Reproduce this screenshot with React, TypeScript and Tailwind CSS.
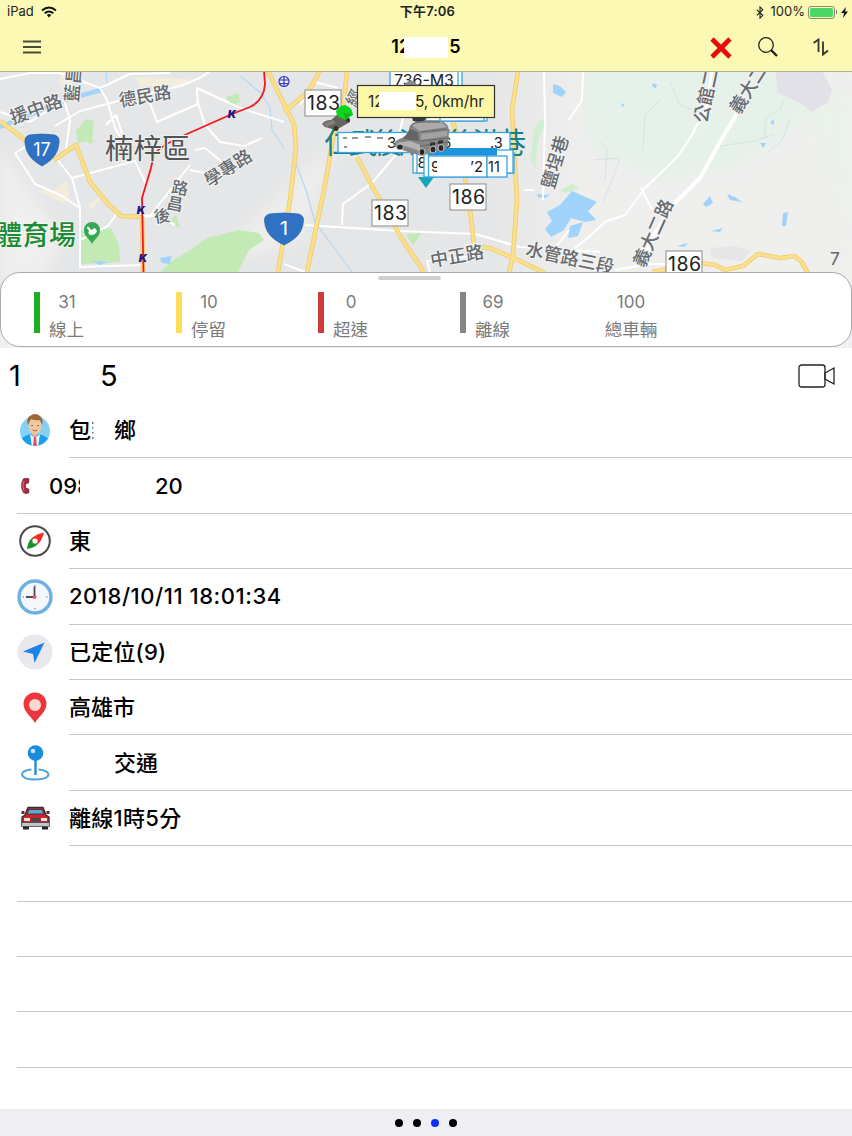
import React from "react";

const roads = [
  "M0 79 L30 73 L60 73 L100 88 L130 74 L170 73",
  "M0 112 L30 122 L64 100 L70 120 L66 150",
  "M55 126 L80 111 L130 98 L180 86 L200 78 L210 71",
  "M100 88 L107 100 L115 128 L128 150",
  "M106 125 L116 115 L127 150",
  "M145 90 L157 122 L198 104 L197 88 L240 108 L284 122",
  "M197 100 L205 125 L220 142 L244 146 L262 138",
  "M15 153 L35 184 L60 195 L80 208 L80 267 L142 265",
  "M15 153 L40 138 L72 178 L80 208",
  "M72 178 L135 161 L146 184",
  "M190 165 L186 170 L150 216 L142 217",
  "M190 170 L205 173 L214 184",
  "M195 150 L205 148 L222 162",
  "M80 240 L108 226 L117 213",
  "M142 215 L160 217 L175 225",
  "M305 225 L400 231 L475 234 L520 247 L600 252",
  "M342 225 L343 204 L372 183 L398 152",
  "M300 105 L315 82 L338 88",
  "M400 131 L413 71",
  "M284 264 L305 272",
  "M524 190 L534 190",
  "M544 71 L545 120 L543 200",
  "M430 272 L427 261 L474 256",
  "M583 71 L582 100 L569 120",
  "M569 230 L552 252 L555 262",
  "M690 138 L678 156 L665 169 L645 188 L625 215 L605 222 L590 236 L575 248",
  "M641 188 L652 210",
  "M615 270 L650 264 L670 264",
];

const yellowRoads = [
  "M0 121 L28 142",
  "M54 160 L76 145 L90 182 L108 204 L121 216 L142 217",
  "M142 216 L143 272",
  "M347 71 L343 110 L334 133 L324 190 L307 272",
  "M268 71 L282 100 L294 124 L296 148 L290 200 L278 272",
  "M320 71 L308 92 L284 112",
  "M357 157 L372 186 L400 236 L424 272",
  "M456 71 L453 120 L465 178 L470 210 L474 245",
  "M474 247 L490 248 L520 261 L545 273",
  "M518 71 L512 110 L514 150 L517 200 L513 255 L509 273",
  "M652 272 L700 263 L715 265 L725 270 L743 266 L758 254 L780 258 L794 256 L801 261 L808 273",
];

const streams = [
  "M106 71 L107 84 L101 90",
  "M240 76 L262 94 L270 108 L272 130 L284 148",
  "M296 164 L306 190 L315 222 L352 272",
];

const creeks = [
  "M594 160 L620 158 L615 173 L603 202",
  "M720 146 L755 141 L775 134",
  "M670 82 L680 105 L707 115",
  "M605 180 L607 150 L600 142",
  "M790 120 L782 140 L768 152",
  "M660 100 L645 115 L643 150",
  "M784 98 L781 108 L766 118 L764 138",
];

const parks = [
  "M76 131 L86 119 L94 121 L92 140 L78 143z",
  "M226 97 L238 93 L240 102 L232 106z",
  "M80 231 L111 228 L119 245 L120 262 L81 264z",
  "M161 272 L170 262 L192 249 L207 238 L239 230 L259 233 L264 240 L249 250 L238 272z",
  "M406 234 L421 233 L413 246z",
  "M168 222 L176 215 L180 228z",
  "M84 138 L96 141 L90 144z",
];

const ponds = [
  "M547 212 L560 205 L572 191 L597 202 L588 211 L596 220 L585 222 L571 218 L564 230 L551 237 L545 229 L552 221z",
  "M570 226 L583 222 L578 236 L568 238z",
  "M553 84 L560 86 L566 92 L562 97 L553 93z",
  "M727 194 L735 197 L742 202 L730 200z",
  "M703 204 L710 196 L713 203 L706 207z",
  "M783 213 L788 212 L786 226 L782 226z",
  "M711 231 L723 228 L720 232z",
  "M677 246 L688 243 L684 247z",
  "M760 143 L766 143 L763 148z",
  "M620 103 L625 105 L623 107z",
  "M652 84 L657 84 L656 88 L653 87z",
  "M770 123 L774 119 L774 125z",
  "M160 258 L172 256 L169 264 L162 263z",
  "M92 261 L108 262 L100 265z",
  "M537 194 L550 195 L545 198 L538 197z",
];

const streetNames = [
  { text: "援中路", x: 36, y: 109, angle: -20, size: 18 },
  { text: "藍昌", x: 73, y: 84, angle: -85, size: 18 },
  { text: "德民路", x: 145, y: 96, angle: -10, size: 17.5 },
  { text: "學專路", x: 228, y: 168, angle: -33, size: 17.5 },
  { text: "後", x: 162, y: 216, angle: -8, size: 16.5 },
  { text: "昌", x: 175, y: 204, angle: 12, size: 16.5 },
  { text: "路", x: 180, y: 188, angle: 10, size: 16.5 },
  { text: "鹽埕巷", x: 555, y: 162, angle: -74, size: 18 },
  { text: "公館二", x: 706, y: 96, angle: -78, size: 18 },
  { text: "義大二", x: 748, y: 89, angle: -58, size: 18 },
  { text: "義大二路", x: 653, y: 233, angle: -66, size: 18 },
  { text: "中正路", x: 457, y: 256, angle: -10, size: 18 },
  { text: "水管路三段", x: 570, y: 258, angle: 12, size: 18 },
  { text: "經", x: 354, y: 98, angle: -62, size: 16 },
];

const plates = [
  { text: "183", x: 305, y: 90, h: 26 },
  { text: "183", x: 372, y: 200, h: 26 },
  { text: "186", x: 450, y: 184, h: 26 },
  { text: "186", x: 666, y: 251, h: 26 },
];

const Shield = ({ x, y, text }: { x: number; y: number; text: string }) => (
  <g transform={`translate(${x} ${y})`}>
    <path
      d="M-13 -15 Q0 -17 13 -15 Q18 -13 17 -7 C16 6 7 12 0 16 C-7 12 -16 6 -17 -7 Q-18 -13 -13 -15z"
      fill="#2f72c4"
      stroke="#225ba4"
      strokeWidth="0.6"
    />
    <text y="6" textAnchor="middle" fontSize="18" fill="#fff">
      {text}
    </text>
  </g>
);

const VehicleMap = () => {
  return (
    <svg
      viewBox="0 72 852 276"
      className="block h-[276px] w-[852px]"
      fontFamily='Inter, "Noto Sans CJK TC", sans-serif'
    >
      <defs>
        <linearGradient id="land">
          <stop offset="0" stopColor="#e5e6e7" />
          <stop offset="0.58" stopColor="#e5e6e7" />
          <stop offset="0.68" stopColor="#eeeeed" />
          <stop offset="1" stopColor="#efefee" />
        </linearGradient>
        <filter id="soft">
          <feGaussianBlur stdDeviation="7" />
        </filter>
      </defs>
      <rect y="71" width="852" height="277" fill="url(#land)" />

      <g filter="url(#soft)">
        <path d="M580 60 L780 60 L840 100 L790 130 L735 170 L660 180 L590 150z" fill="#e6f1e9" />
        <path d="M800 110 L852 90 L852 240 L845 220z" fill="#ebf2ea" />
        <path d="M0 150 L60 235 L45 280 L0 280z" fill="#efefef" />
        <path d="M200 272 L310 165 L340 140 L300 240z" fill="#ededec" />
      </g>
      <path d="M776 71 H822 L832 90 L828 102 L812 112 L800 103 L777 92z" fill="#e2e1e7" />
      <path d="M56 190 L66 180 L70 200 L62 203 L37 190z M88 205 L106 192 L95 205 L90 211z M135 77 L190 79 L180 86 L140 86z" fill="#f5eddb" />
      <path d="M60 71 L80 71 L70 88 L60 85z" fill="#f3ecdc" />
      <path d="M710 248 L735 246 L750 251 L742 261 L712 258z" fill="#e6e6e7" />
      <path d="M534 130 L540 119 L546 122 L538 140 L535 168 L530 160z M560 190 L572 184 L580 188 L565 193z" fill="#d0eed0" />

      {parks.map((d) => (
        <path key={d} d={d} fill="#c3e9b5" />
      ))}
      {ponds.map((d) => (
        <path key={d} d={d} fill="#9fd3fb" />
      ))}
      <g fill="none" stroke="#b3d8f2" strokeWidth="1.2">
        {streams.map((d) => (
          <path key={d} d={d} />
        ))}
      </g>
      <g fill="none" stroke="#d5e2e6" strokeWidth="1">
        {creeks.map((d) => (
          <path key={d} d={d} />
        ))}
      </g>
      <path d="M0 127 L30 115 L65 100 L101 90" fill="none" stroke="#a3d5f8" strokeWidth="4.5" />

      <g fill="none" stroke="#fff" strokeWidth="2" strokeLinejoin="round">
        {roads.map((d) => (
          <path key={d} d={d} />
        ))}
        <path d="M742 105 L720 142 L700 178 L675 203 L652 238 L642 265" strokeWidth="4" />
        <path d="M712 71 L706 110 L690 138" strokeWidth="2.5" />
      </g>
      <g fill="none" stroke="#f0cb6c" strokeWidth="4.6" strokeLinejoin="round">
        {yellowRoads.map((d) => (
          <path key={d} d={d} />
        ))}
      </g>
      <g fill="none" stroke="#fbe08c" strokeWidth="3" strokeLinejoin="round">
        {yellowRoads.map((d) => (
          <path key={d} d={d} />
        ))}
      </g>

      <path
        d="M264 71 L265 84 Q264 100 250 107 L232 114 L187 134 Q163 144 154 154 L151 168 L142 198 L143.5 273"
        fill="none"
        stroke="#f5171b"
        strokeWidth="1.8"
      />
      <g fill="#1d1688" fontSize="11" fontWeight="900" fontStyle="italic" textAnchor="middle">
        <text x="232" y="118">K</text>
        <text x="141" y="214">K</text>
        <text x="143" y="262">K</text>
      </g>
      <g fill="none" stroke="#3b36c4" strokeWidth="1.2">
        <circle cx="284" cy="81.500" r="5" />
        <path d="M284 76 V87 M279 80 H289 M279 83.500 H289" />
      </g>

      <g fill="#666c70" fontWeight="500" stroke="#f4f4f4" strokeWidth="2" paintOrder="stroke">
        {streetNames.map((s) => (
          <text
            key={s.text + s.x}
            transform={`translate(${s.x} ${s.y}) rotate(${s.angle})`}
            y={s.size * 0.36}
            fontSize={s.size}
            textAnchor="middle"
          >
            {s.text}
          </text>
        ))}
      </g>
      <text x="105" y="159" fontSize="28.500" fill="#515356" stroke="#f0f0f0" strokeWidth="2" paintOrder="stroke">
        楠梓區
      </text>
      <text x="-5" y="244.500" fontSize="27" fontWeight="500" fill="#1f8a35" stroke="#f0f5ef" strokeWidth="2" paintOrder="stroke">
        體育場
      </text>
      <path d="M92 244 C90 239 84 237 84 230 A8 8 0 0 1 100 230 C100 237 94 239 92 244z" fill="#35a853" />
      <path d="M87 228 Q87 226 89 227 L91 230 L95 228 L97 231 Q96 235 91 235 Q87 234 89 231z" fill="#fff" />

      <Shield x={42} y={150} text="17" />
      <g transform="translate(284 229) scale(1.14 1)">
        <Shield x={0} y={0} text="1" />
      </g>

      {plates.map((p) => (
        <g key={p.text + p.x}>
          <rect x={p.x} y={p.y} width="36" height={p.h} fill="#fff" stroke="#8a8a8a" />
          <text x={p.x + 2} y={p.y + 20} fontSize="19.500" textLength="33" fill="#222">
            {p.text}
          </text>
        </g>
      ))}
      <text x="830" y="265" fontSize="17.500" fill="#666">
        7
      </text>

      {/* town name and vehicles at the depot */}
      <text x="324" y="154" fontSize="29" textLength="202" fill="#158186">
        仁武後港新後港巷
      </text>
      <path d="M418 177 H434 L426 188z" fill="#11a7b8" />

      <g fill="#fff" stroke="#3aa5e2" strokeWidth="1.3">
        <rect x="394" y="66" width="68" height="22" />
        <rect x="390" y="66" width="68" height="22" />
        <rect x="426" y="99" width="61" height="22" />
        <rect x="440" y="99" width="44" height="22" />
        <rect x="338" y="132.500" width="72" height="20" />
        <rect x="442" y="132.500" width="68" height="20" />
        <rect x="413" y="153" width="101" height="20" />
        <rect x="417" y="150" width="96" height="23" />
      </g>
      <text x="417.500" y="168" fontSize="15" fill="#222">
        8
      </text>
      <g fill="#fff" stroke="#3aa5e2" strokeWidth="1.3">
        <rect x="424" y="153" width="63" height="24" />
        <rect x="428.500" y="156" width="58.500" height="21" />
        <rect x="487" y="156" width="20" height="21" />
      </g>
      <path d="M435 148 H497 V155.500 H427z" fill="#1d94dc" />
      <g fill="#222" fontSize="15">
        <text x="394" y="86" fontSize="16" textLength="60">
          736-M3
        </text>
        <text x="387" y="148">3</text>
        <text x="442" y="148">6</text>
        <text x="490" y="148" fontSize="14.500">
          .3
        </text>
        <text x="431" y="172">9</text>
        <text x="470" y="172">’2</text>
        <text x="488" y="172" fontSize="14.500">
          11
        </text>
      </g>
      <rect x="437" y="159" width="34" height="16" fill="#fff" />
      <path d="M343 138 h4 m5 0 h6 m7 -1 h6 m6 1 h6 M344 147 h3" stroke="#333" strokeWidth="1.2" />

      {/* parked grey truck */}
      <g>
        <path d="M412 117 H426 L424 123 L413 121z" fill="#383838" />
        <path
          d="M394 146 Q394 140 402 138 L409 133 Q408 126 413 123 Q425 119 441 121 Q449 123 449 132 L448 145 Q447 151 439 151 L421 156 L402 150z"
          fill="#868686"
        />
        <path d="M411 125 Q424 120 441 122 L447 127 L420 131z" fill="#aaa" />
        <path d="M411 127 Q412 123 418 122 H440" fill="none" stroke="#5e5e5e" />
        <path d="M410 129 L418 132 L419 141 L403 139z" fill="#656565" />
        <path d="M396 143 L410 141 L420 145 V151 L408 147z" fill="#b3b3b3" />
        <path d="M421 134 L447 131 V136 L421 140z" fill="#a3a3a3" />
        <path d="M420 132 L447 129 M420 141 L448 138 M420 146 L448 142 M431 141 V151 M440 139 V149" fill="none" stroke="#666" />
        <path d="M430 143 l5 -1 v3 l-5 1z M438 141 l5 -1 v3 l-5 1z" fill="#333" />
        <g fill="#282828" stroke="#c5c5c5">
          <ellipse cx="400" cy="147" rx="3.500" ry="3" />
          <ellipse cx="422" cy="152" rx="3" ry="3.500" />
          <ellipse cx="433" cy="149.500" rx="3" ry="3.500" />
          <ellipse cx="441" cy="148" rx="3" ry="3.500" />
        </g>
      </g>
      {/* moving truck */}
      <g>
        <path d="M322 124 Q325 120 331 120 L337 115 L350 119 V122 L336 130 L325 127z" fill="#65635b" />
        <path d="M323 124 L333 120 L336 123 L327 127z" fill="#85827b" />
        <circle cx="336" cy="128.500" r="2.500" fill="#333" />
        <circle cx="348" cy="120" r="2" fill="#333" />
        <path d="M336 111 Q340 105 345 105 Q352 107 353 115 L345 120 L337 116z" fill="#0cd41a" />
        <path d="M343 113 L351 114 L346 119z" fill="#10af1c" />
      </g>
      <path d="M404 85 Q411 76 417 85z" fill="#8b8b8b" />

      <rect x="357.500" y="85.500" width="137" height="32" fill="#fcf8a7" stroke="#333" strokeWidth="1.2" />
      <g fill="#26261c" fontSize="15.500">
        <text x="368" y="107">12</text>
        <rect x="379" y="92" width="37" height="18" fill="#fff" />
        <text x="415" y="107" textLength="69">
          5, 0km/hr
        </text>
      </g>
    </svg>
  );
};

const stats = [
  { count: "31", label: "線上", color: "bg-[#1cae24]" },
  { count: "10", label: "停留", color: "bg-[#ffdc55]" },
  { count: "0", label: "超速", color: "bg-[#cf3a3b]" },
  { count: "69", label: "離線", color: "bg-[#868686]" },
];

const DriverIcon = () => (
  <svg viewBox="0 0 36 36" className="h-9 w-9">
    <clipPath id="avatar">
      <path d="M3 0 H33 V18 A15 15 0 0 1 3 18z" />
    </clipPath>
    <circle cx="18" cy="18" r="15" fill="#85d0f5" />
    <g clipPath="url(#avatar)">
      <path d="M4 34 V26 Q10 21 15 21 H21 Q27 22 32 26 V34z" fill="#15a2eb" />
      <path d="M13 21 L18 25 L23 21 L21 34 H15z" fill="#f2f5fa" />
      <path d="M17 23.500 H19 L20 34 H16z" fill="#e14d65" />
    </g>
    <path d="M15 18 H21 V22 L18 24.500 L15 22z" fill="#e2b58c" />
    <ellipse cx="18" cy="13" rx="6.500" ry="8" fill="#efc99d" />
    <path d="M11 12 Q9 5 13 3 Q18 -1 23 3 Q27 6 25 12 L23 7 Q18 8 14 6z" fill="#9c653b" />
    <path d="M15 12 v1 M21 12 v1" stroke="#634c32" strokeWidth="1.4" />
    <path d="M15.500 17 Q18 19 20.500 17" fill="none" stroke="#b3644b" />
  </svg>
);

const PhoneIcon = () => (
  <svg viewBox="0 0 16 16" className="h-4 w-4">
    <path
      d="M6.500 0.800 Q10 -0.500 12 1 L11.500 5 L9 5.500 Q7.800 8 9 10.500 L11.700 11 L12 14.500 Q9 16.500 6.500 14.500 Q2.500 8 6.500 0.800z"
      fill="#a92b40"
      stroke="#64242d"
      strokeWidth="0.8"
    />
    <path d="M7 3 Q4.500 8 7 13" fill="none" stroke="#da7383" />
  </svg>
);

const CompassIcon = () => (
  <svg viewBox="0 0 36 36" className="h-9 w-9">
    <circle cx="18" cy="18" r="14.800" fill="#fff" stroke="#48484c" strokeWidth="2" />
    <path d="M27 9.500 Q25 17 21.500 20.500 L14.500 15.500 Q19 11 27 9.500z" fill="#f52b25" />
    <path d="M10 26 Q11 18.500 14.500 15.500 L21.500 20.500 Q17 25 10 26z" fill="#179225" />
    <circle cx="18" cy="18" r="2.600" fill="#fff" />
  </svg>
);

const ClockIcon = () => (
  <svg viewBox="0 0 36 36" className="h-9 w-9">
    <circle cx="18" cy="18" r="16" fill="#f4f7fb" stroke="#6db1e3" strokeWidth="3.400" />
    <path d="M18 6 v1.500 M18 29 v1.500 M5.500 18 h1.500 M29 18 h1.500" stroke="#777" />
    <path d="M17.500 7.500 V18 H9" fill="none" stroke="#4b4b55" strokeWidth="1.8" />
    <circle cx="17.500" cy="18" r="2" fill="#e05360" />
  </svg>
);

const LocateIcon = () => (
  <svg viewBox="0 0 36 36" className="h-9 w-9">
    <circle cx="18" cy="18" r="17.500" fill="#e8e9ec" />
    <path d="M27.500 8.500 L17.500 29 L16 20 L6 17.500z" fill="#1c83ea" />
  </svg>
);

const PinIcon = () => (
  <svg viewBox="0 0 36 36" className="h-9 w-9">
    <path d="M18 33 C15 27 6.500 22 6.500 14 A11.500 11.500 0 0 1 29.500 14 C29.500 22 21 27 18 33z" fill="#ed353e" />
    <circle cx="18" cy="15" r="6" fill="#f9d9cf" />
  </svg>
);

const PlaceIcon = () => (
  <svg viewBox="0 0 36 36" className="h-9 w-9">
    <path
      d="M14.500 24.500 Q5 25.500 5 29.500 Q6 34.500 18 34.500 Q31 34.500 31.500 29.500 Q31 25.500 21.500 24.500"
      fill="none"
      stroke="#4ba3dd"
      strokeWidth="2"
    />
    <path d="M18.500 13 V30" stroke="#278dcd" strokeWidth="2.400" />
    <circle cx="18.500" cy="8" r="7.800" fill="#198cdf" />
    <circle cx="16" cy="6" r="2.300" fill="#c4e6fb" />
  </svg>
);

const CarIcon = () => (
  <svg viewBox="0 0 36 36" className="h-9 w-9">
    <path d="M6 26 h6 v3.500 H6z M25 26 h6 v3.500 h-6z" fill="#272424" />
    <path d="M8 15 L11 7.500 H26 L29 15 L32 17 V25 H5 V17z" fill="#c9252b" stroke="#43262a" strokeWidth="1.4" />
    <path d="M12 9.500 H25 L27 14 H10z" fill="#59aad4" stroke="#382b32" strokeWidth="0.800" />
    <path d="M4.500 11 h3 v3 h-3z M29.500 11 h3 v3 h-3z" fill="#542d30" />
    <path d="M7 18 h6 v3 H7z M24 18 h6 v3 h-6z" fill="#eee9df" />
    <path d="M14 18 h9 v3.500 h-9z" fill="#464650" />
    <path d="M4.500 22.500 H32.500 V26.500 H4.500z" fill="#bfc4c9" stroke="#44444a" strokeWidth="0.800" />
  </svg>
);

const details = [
  {
    icon: <DriverIcon />,
    value: (
      <>
        <span>包</span>
        <svg viewBox="0 0 2 20" className="ml-px h-5 w-0.5" fill="#777">
          <path d="M0 1 h1.500 v2 H0z M0 6 h1.500 v1.500 H0z M0 11 h1.500 v1.500 H0z M0 16 h1.500 v2 H0z" />
        </svg>
        <span className="ml-5">鄉</span>
      </>
    ),
  },
  { icon: <CompassIcon />, value: "東" },
  { icon: <ClockIcon />, value: <span className="tracking-[0.55px]">2018/10/11 18:01:34</span> },
  { icon: <LocateIcon />, value: <span className="tracking-[0.2px]">已定位(9)</span> },
  { icon: <PinIcon />, value: "高雄市" },
  { icon: <PlaceIcon />, value: <span className="ml-[45px]">交通</span> },
  { icon: <CarIcon />, value: <span className="tracking-[0.3px]">離線1時5分</span> },
];

const DetailRow = ({ icon, value }: { icon: React.ReactNode; value: React.ReactNode }) => (
  <div className="flex h-[55.4px] pl-[17px]">
    <div className="flex w-[52px] items-center">{icon}</div>
    <div className="flex flex-1 items-center border-b border-[#c8c7cc] pt-px whitespace-pre">{value}</div>
  </div>
);

const App = () => {
  return (
    <div className="flex h-[1136px] w-[852px] flex-col overflow-hidden bg-white font-[Inter,'Noto_Sans_CJK_TC',sans-serif] text-black">
      <header className="flex h-[72px] shrink-0 flex-col bg-[#fbf9b3]">
        <div className="grid h-6 grid-cols-3 items-center pr-1 pl-[7px] text-[13px] text-[#222]">
          <div className="flex items-center gap-2">
            <span>iPad</span>
            <svg viewBox="0 0 16 12" className="-ml-px h-3 w-4" fill="none" stroke="#111" strokeWidth="2">
              <path d="M1 4.500 Q8 -1.500 15 4.500 M3.700 7.300 Q8 3.600 12.300 7.300" />
              <path d="M5.800 9 Q8 7.200 10.200 9 L8 11.500z" fill="#111" stroke="none" />
            </svg>
          </div>
          <div className="text-center font-semibold tracking-[0.2px]">下午7:06</div>
          <div className="flex items-center justify-end">
            <svg viewBox="0 0 10 14" className="mr-1.5 h-[13px] w-2.5" fill="none" stroke="#222" strokeWidth="1.2">
              <path d="M1.500 4 L8 10 L5 13 V1 L8 4 L1.500 10" />
            </svg>
            <span>100%</span>
            <div className="ml-[3px] h-[13px] w-[27px] rounded-[3px] border border-[#8b8b71] p-px">
              <div className="h-full rounded-[1.5px] bg-[#4cd664]" />
            </div>
            <div className="ml-px h-1 w-px bg-[#777]" />
            <svg viewBox="0 0 7 11" className="ml-1 h-[11px] w-[7px]" fill="#111">
              <path d="M5 0 L0 6 H3 L2 11 L7 4.500 H4z" />
            </svg>
          </div>
        </div>
        <div className="grid flex-1 grid-cols-3 items-center border-b border-[#b0af91] pr-[23px] pb-px pl-[23px]">
          <svg viewBox="0 0 18 14" className="h-3.5 w-[18px]" stroke="#4c4a38" strokeWidth="2">
            <path d="M0 1.500 H18 M0 7 H18 M0 12.500 H18" />
          </svg>
          <div className="flex items-center justify-center text-lg font-semibold">
            <span className="w-[13px] overflow-hidden">12</span>
            <span className="h-[21px] w-[44px] bg-white" />
            <span className="ml-px">5</span>
          </div>
          <div className="flex items-center justify-end">
            <svg viewBox="0 0 22 22" className="mt-0.5 h-[22px] w-[22px]" stroke="#ec0909" strokeWidth="4.600">
              <path d="M2 2 L20 20 M20 2 L2 20" />
            </svg>
            <svg viewBox="0 0 20 20" className="ml-[26px] h-5 w-5" fill="none" stroke="#222">
              <circle cx="8" cy="8" r="7.300" strokeWidth="1.3" />
              <path d="M13 13 L19 19" strokeWidth="2.400" />
            </svg>
            <svg viewBox="0 0 16 18" className="ml-[35px] h-[18px] w-4" fill="none" stroke="#35342a" strokeWidth="1.800">
              <path d="M0.500 5 L5.500 1.500 V14 M10 3.500 V16.500 L15 12.500" />
            </svg>
          </div>
        </div>
      </header>

      <div className="relative h-[276px] shrink-0 overflow-hidden">
        <VehicleMap />
        <div className="absolute inset-x-0 bottom-0 h-9 bg-[#f0f0f2]" />
        <div className="absolute inset-x-0 bottom-px flex h-[75px] rounded-[20px] border border-[#aaa] bg-white pl-[33px]">
          <div className="absolute top-[3px] left-[377px] h-1 w-[63px] rounded-full bg-[#d0d0d0]" />
          {stats.map((s) => (
            <div key={s.label} className="flex w-[142px] pt-[19px]">
              <div className={`h-[41px] w-[6px] ${s.color}`} />
              <div className="ml-[9px] w-9 text-center text-[17.5px] leading-[22px] text-[#7b7b7b]">
                <div className="-mt-px text-[17px]">{s.count}</div>
                <div className="mt-1.5 -ml-px">{s.label}</div>
              </div>
            </div>
          ))}
          <div className="-ml-px w-[60px] pt-[18px] text-center text-[17.5px] leading-[22px] text-[#7b7b7b]">
            <div className="text-[17px]">100</div>
            <div className="mt-1.5">總車輛</div>
          </div>
        </div>
      </div>

      <div className="flex h-[55px] shrink-0 items-center justify-between pr-[17px] pl-[9px] text-[29px]">
        <div className="flex">
          <span className="w-[91px]">1</span>
          <span>5</span>
        </div>
        <svg viewBox="0 0 37 24" className="h-6 w-[37px]" fill="none" stroke="#222" strokeWidth="1.300">
          <rect x="1" y="1" width="26" height="22" rx="2.500" />
          <path d="M27 9 L36 4 V20 L27 15z" />
        </svg>
      </div>

      <main className="flex-1 text-[22px] font-medium">
        <DetailRow {...details[0]} />
        <div className="ml-[17px] flex h-[55.4px] items-center border-b border-[#c8c7cc] pt-px">
          <PhoneIcon />
          <span className="ml-4 w-[31px] overflow-hidden whitespace-nowrap">098</span>
          <span className="ml-[75px]">20</span>
        </div>
        {details.slice(1).map((d, i) => (
          <DetailRow key={i} {...d} />
        ))}
        {[1, 2, 3, 4].map((n) => (
          <div key={n} className="ml-[17px] h-[55.4px] border-b border-[#c8c7cc]" />
        ))}
      </main>

      <footer className="flex h-[27px] shrink-0 items-center justify-center gap-[9.7px] bg-[#efeff3]">
        <span className="h-2 w-2 rounded-full bg-black" />
        <span className="h-2 w-2 rounded-full bg-black" />
        <span className="h-2 w-2 rounded-full bg-[#0c2dfa]" />
        <span className="h-2 w-2 rounded-full bg-black" />
      </footer>
    </div>
  );
};

export default App;
